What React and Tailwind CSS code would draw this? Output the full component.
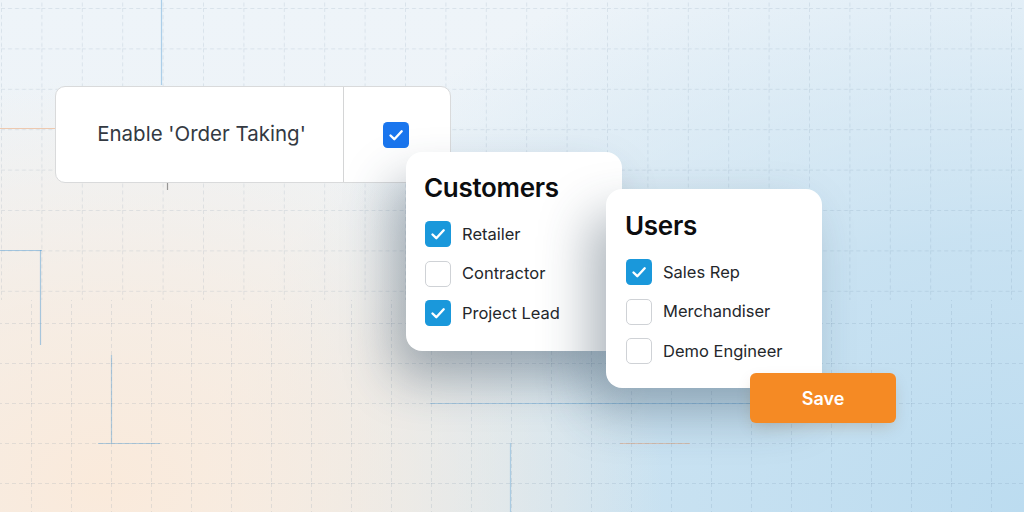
import React from "react";

function Check({ color }) {
  return (
    <svg width="26" height="26" viewBox="0 0 26 26" className="block">
      <rect x="0" y="0" width="26" height="26" rx="4.5" fill={color} />
      <path d="M7.5 13.5 L11.3 17.2 L18.7 9.3" fill="none" stroke="#fff" strokeWidth="2.4" strokeLinecap="round" strokeLinejoin="round" />
    </svg>
  );
}

function Box({ checked }) {
  if (checked) return <Check color="#1a98db" />;
  return <div className="w-[26px] h-[26px] rounded-[5px] border-[1.5px] border-[#cfd2d6] bg-white" />;
}

function Row({ checked, label }) {
  return (
    <div className="flex items-center gap-[11px] h-[26px]">
      <Box checked={checked} />
      <span className="text-[16.5px] text-[#24272b] leading-none">{label}</span>
    </div>
  );
}

function Panel({ title, rows, className }) {
  return (
    <div className={className}>
      <div className="text-[26px] font-semibold text-[#0c0d0f] leading-[32px] tracking-[-0.3px]">{title}</div>
      <div className="flex flex-col gap-[13.5px] mt-[17px] pl-[1px]">
        {rows.map((r) => (
          <Row key={r[1]} checked={r[0]} label={r[1]} />
        ))}
      </div>
    </div>
  );
}

function Grid() {
  return (
    <svg className="absolute inset-0 pointer-events-none" width="1024" height="512" viewBox="0 0 1024 512">
      <defs>
        <pattern id="gA" x="1" y="8" width="40.4" height="40.4" patternUnits="userSpaceOnUse">
          <path d="M0 0.5 H40.4 M0.5 0 V40.4" fill="none" stroke="rgba(80,110,140,0.13)" strokeWidth="1" strokeDasharray="4 3" />
        </pattern>
        <pattern id="gB" x="-9" y="3" width="40" height="40" patternUnits="userSpaceOnUse">
          <path d="M0 0.5 H40 M0.5 0 V40" fill="none" stroke="rgba(80,110,140,0.13)" strokeWidth="1" strokeDasharray="4 3" />
        </pattern>
      </defs>
      <rect x="0" y="0" width="1024" height="300" fill="url(#gA)" />
      <rect x="0" y="300" width="1024" height="212" fill="url(#gB)" />
      <g strokeWidth="1.2" fill="none">
        <path d="M161.5 0 V85" stroke="rgba(70,150,210,0.4)" />
        <path d="M0 128.5 H55" stroke="rgba(235,150,90,0.45)" />
        <path d="M0 250.5 H42" stroke="rgba(70,150,210,0.45)" />
        <path d="M40.5 250 V345" stroke="rgba(70,150,210,0.45)" />
        <path d="M111.5 355 V443" stroke="rgba(70,150,210,0.4)" />
        <path d="M98 443.5 H160" stroke="rgba(70,150,210,0.4)" />
        <path d="M430 403.5 H760" stroke="rgba(70,150,210,0.35)" />
        <path d="M510.5 443 V512" stroke="rgba(70,150,210,0.35)" />
        <path d="M620 443.5 H690" stroke="rgba(235,150,90,0.4)" />
        <path d="M167.5 183 V190" stroke="rgba(60,60,60,0.5)" />
      </g>
    </svg>
  );
}

export default function App() {
  return (
    <div
      className="relative w-[1024px] h-[512px] overflow-hidden font-['Inter','Noto_Sans',sans-serif] bg-[radial-gradient(ellipse_55%_80%_at_10%_95%,#faeadb_0%,rgba(250,234,219,0.65)_45%,rgba(250,234,219,0)_100%),radial-gradient(ellipse_80%_120%_at_100%_100%,#bcdcf0_0%,rgba(188,220,240,0.75)_45%,rgba(188,220,240,0)_100%),linear-gradient(180deg,#eef4f9_0%,#edf2f5_100%)]"
    >
      <Grid />

      <div className="absolute left-[55px] top-[86px] w-[396px] h-[97px] flex bg-white rounded-[10px] border border-[#d9dadb]">
        <div className="w-[288px] flex items-center justify-center border-r border-[#d4d5d6]">
          <span className="text-[20.5px] text-[#333942] pl-[4px]">Enable 'Order Taking'</span>
        </div>
        <div className="flex-1 flex items-center justify-center pr-[2px]">
          <Check color="#1a76ee" />
        </div>
      </div>

      <Panel
        title="Customers"
        rows={[[true, "Retailer"], [false, "Contractor"], [true, "Project Lead"]]}
        className="absolute left-[406px] top-[152px] w-[216px] h-[199px] bg-white rounded-[16px] pl-[18px] pt-[20px] shadow-[-14px_28px_50px_-2px_rgba(40,60,80,0.4)]"
      />

      <Panel
        title="Users"
        rows={[[true, "Sales Rep"], [false, "Merchandiser"], [false, "Demo Engineer"]]}
        className="absolute left-[606px] top-[189px] w-[216px] h-[199px] bg-white rounded-[16px] pl-[19px] pt-[21px] shadow-[-18px_24px_50px_-2px_rgba(40,60,80,0.38)]"
      />

      <button className="absolute left-[750px] top-[373px] w-[146px] h-[50px] rounded-[6px] bg-[#f58a24] text-white text-[18px] font-semibold flex items-center justify-center shadow-[0_6px_16px_-4px_rgba(120,70,20,0.25)]">
        Save
      </button>
    </div>
  );
}
